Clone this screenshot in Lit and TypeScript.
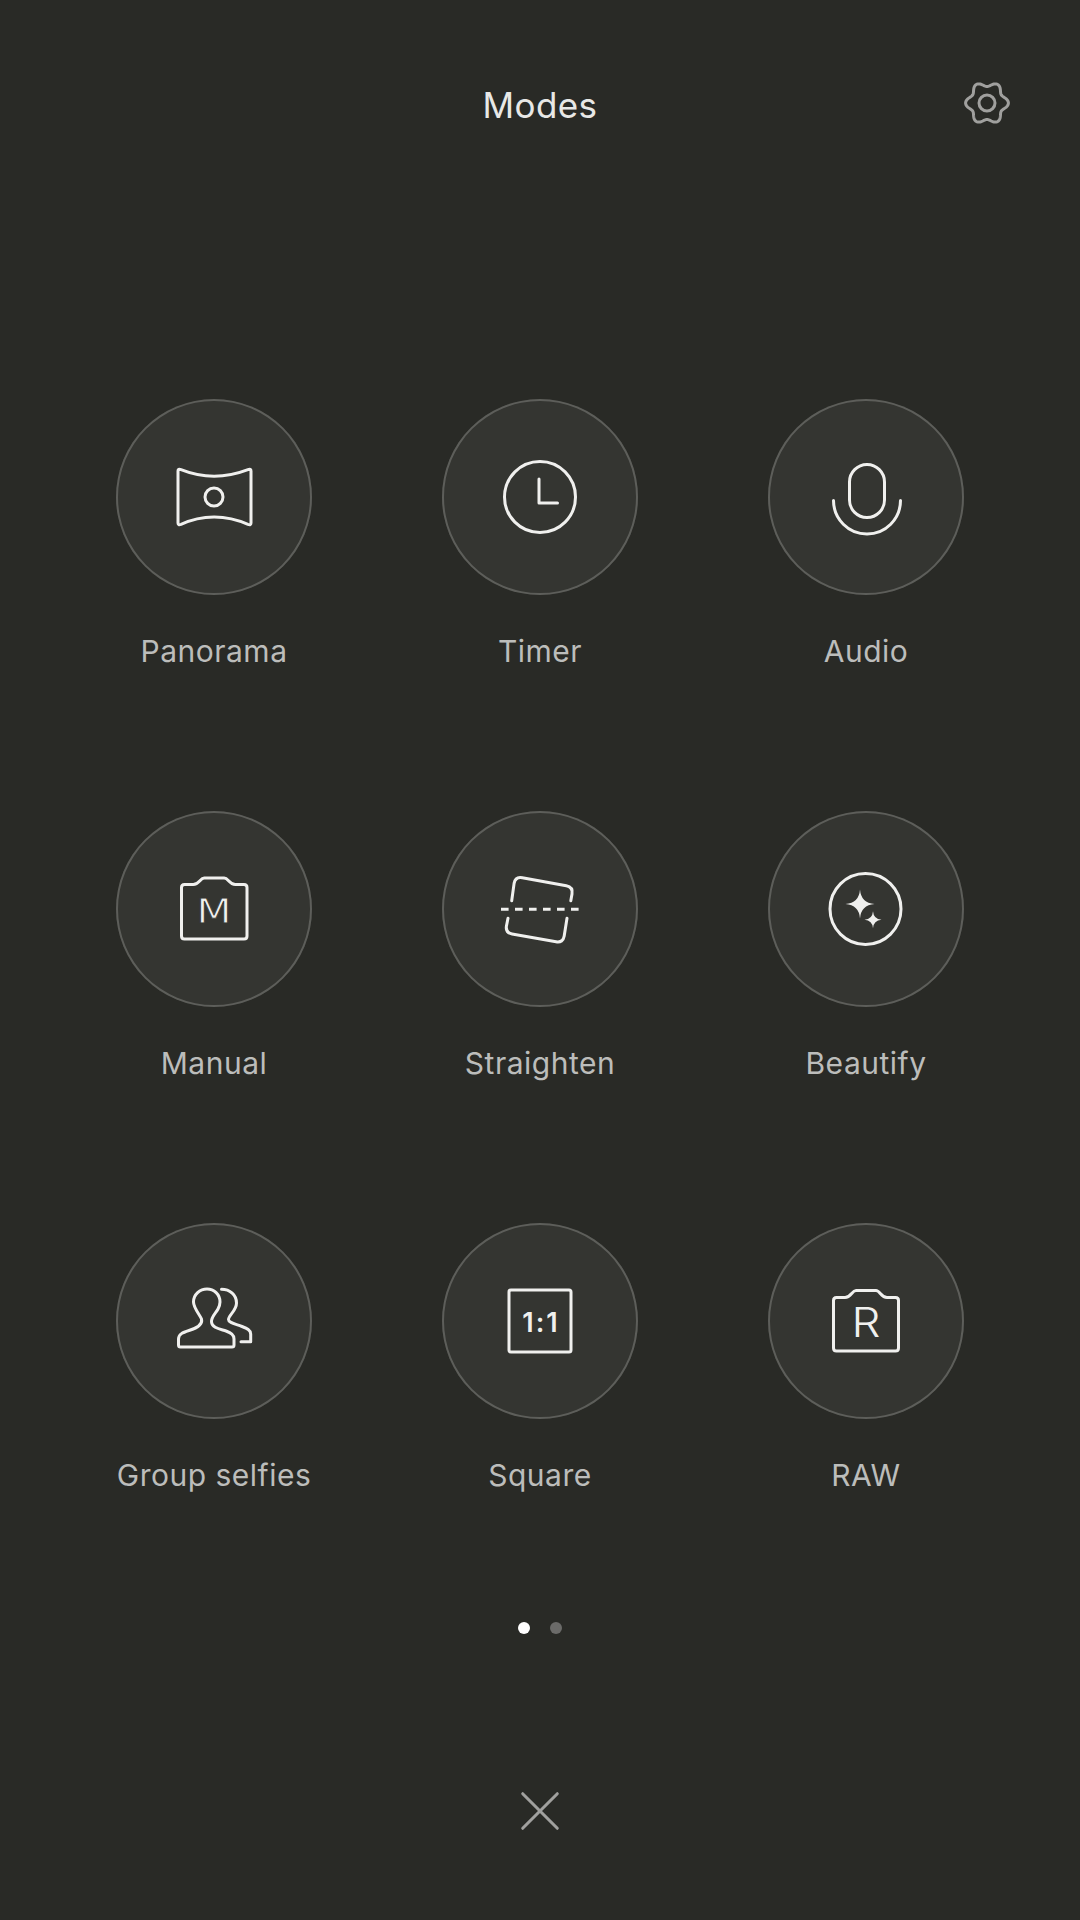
import { LitElement, html, css, svg } from "lit";
import { customElement } from "lit/decorators.js";

const gearPath = (() => {
  const pts: string[] = [];
  for (let i = 0; i < 180; i++) {
    const t = (i / 180) * Math.PI * 2;
    const r = 18.9 + 2.5 * Math.cos(6 * t);
    pts.push(`${(24 + r * Math.cos(t)).toFixed(2)} ${(24 + r * Math.sin(t)).toFixed(2)}`);
  }
  return "M" + pts.join("L") + "Z";
})();

const camera = (l: number, r: number, top: number, sh: number, bot: number) => {
  const c = (l + r) / 2;
  return svg`<path d="M${l + 3} ${sh} H${c - 21} C${c - 15} ${sh} ${c - 14} ${top} ${c - 10} ${top} H${c + 10} C${c + 14} ${top} ${c + 15} ${sh} ${c + 21} ${sh} H${r - 3} Q${r} ${sh} ${r} ${sh + 3} V${bot - 3} Q${r} ${bot} ${r - 3} ${bot} H${l + 3} Q${l} ${bot} ${l} ${bot - 3} V${sh + 3} Q${l} ${sh} ${l + 3} ${sh}Z"/>`;
};

const sparkle = (x: number, y: number, a: number, c: number) =>
  svg`<path class="solid" d="M${x} ${y - a} Q${x + c} ${y - c} ${x + a} ${y} Q${x + c} ${y + c} ${x} ${y + a} Q${x - c} ${y + c} ${x - a} ${y} Q${x - c} ${y - c} ${x} ${y - a}Z"/>`;

const modes = [
  { label: "Panorama", icon: svg`
    <path d="M62 72 Q62 69.5 65 70.6 C86 79 110 79 132 70.6 Q135 69.5 135 72 V124 Q135 126.5 132 125.4 C110 115.5 86 115.5 65 125.4 Q62 126.5 62 124Z"/>
    <circle cx="98" cy="98" r="9"/>` },
  { label: "Timer", icon: svg`
    <circle cx="98" cy="98" r="35.5"/>
    <path d="M97 80 V104 H115.5"/>` },
  { label: "Audio", icon: svg`
    <rect x="81.5" y="65.5" width="35" height="53" rx="17.5"/>
    <path d="M65.5 101.5 A33.5 33.5 0 0 0 132.5 101.5"/>` },
  { label: "Manual", icon: svg`
    ${camera(65.5, 131, 67, 73.5, 128)}
    <text class="m" x="98" y="111.8" textLength="35" lengthAdjust="spacingAndGlyphs">M</text>` },
  { label: "Straighten", icon: svg`
    <path d="M69.7 89.7 L72.1 72.4 Q73.4 65.5 80.3 66.8 L124.3 74.7 Q131.2 76 130 82.9 L128.8 89.7"/>
    <path d="M125 107.3 L122.2 125.1 Q121 132 114.1 130.8 L70.1 122.9 Q63.2 121.6 64.5 114.7 L66 107.3"/>
    <path class="dash" d="M59 98.3 H137.5"/>` },
  { label: "Beautify", icon: svg`
    <circle cx="97.5" cy="98" r="35.5"/>
    ${sparkle(92, 93, 14.5, 1)}
    ${sparkle(105, 108.7, 8.5, 0.6)}` },
  { label: "Group selfies", icon: svg`
    <path d="M64.5 124 H116 Q118 124 118 122 V116 C118 111.5 115 110 110 108 C104 106 96 105 95.5 99 C95 94 100 90 102 86 C103.5 83 104 81 104 79 C104 71.5 98 66 91 66 C84 66 77.5 71.5 77.5 79 C77.5 85 84 92 85.5 96 C87 102 81 105 73 107.5 C67 109.5 62.5 111 62.5 116 V122 Q62.5 124 64.5 124Z"/>
    <path d="M105.5 66.3 C114 66.3 120.5 72 120.5 80 C120.5 88 112.5 92 112.5 96.5 C112.5 100 120 101 126 103.5 C131 105.5 134.7 107 134.7 111 V118.7 H125"/>` },
  { label: "Square", icon: svg`
    <rect x="67" y="67" width="62" height="62" rx="2"/>
    <text class="ratio" x="99" y="109.3">1:1</text>` },
  { label: "RAW", icon: svg`
    ${camera(65.5, 130.5, 67.5, 74.5, 128)}
    <text class="r" x="98" y="114.4" textLength="29" lengthAdjust="spacingAndGlyphs">R</text>` },
];

@customElement("app-root")
export class AppRoot extends LitElement {
  static styles = css`
    :host {
      display: block;
      width: 1080px;
      height: 1920px;
      background: #292a26;
      font-family: Inter, "Noto Sans", sans-serif;
      overflow: hidden;
    }
    .header {
      display: grid;
      grid-template-columns: 1fr auto 1fr;
      align-items: center;
      height: 210px;
      padding-right: 69.5px;
      padding-left: 69.5px;
    }
    .title {
      grid-column: 2;
      color: #e8e8e6;
      font-size: 35px;
      letter-spacing: 0.4px;
      line-height: 40px;
    }
    .gear {
      grid-column: 3;
      justify-self: end;
      width: 48px;
      height: 48px;
      margin-bottom: 4px;
      fill: none;
      stroke: #a0a09e;
      stroke-width: 3;
    }
    .grid {
      display: grid;
      grid-template-columns: repeat(3, 326px);
      grid-auto-rows: 412px;
      padding: 189px 51px 0;
    }
    .cell {
      display: flex;
      flex-direction: column;
      align-items: center;
    }
    .circle {
      width: 196px;
      height: 196px;
      border-radius: 50%;
      background: #343531;
      box-shadow: inset 0 0 0 2px #5d5e5a;
    }
    .circle svg {
      display: block;
      fill: none;
      stroke: #f0f0ee;
      stroke-width: 3;
      stroke-linecap: round;
      stroke-linejoin: round;
    }
    .circle .solid { fill: #f0f0ee; stroke: none; }
    .circle .dash {
      stroke-linecap: butt;
      stroke-dasharray: 7.6 6.4;
    }
    .circle text { stroke: none; fill: #f0f0ee; text-anchor: middle; }
    .circle .m {
      font-family: "DejaVu Sans", sans-serif;
      font-size: 33px;
      stroke: #343531;
      stroke-width: 0.8px;
    }
    .circle .r { font-family: Inter, sans-serif; font-size: 41px; font-weight: 300; }
    .circle .ratio { font-family: Inter, sans-serif; font-size: 27px; font-weight: 600; letter-spacing: 2px; }
    .label {
      margin-top: 38px;
      color: #bcbdbb;
      font-size: 30px;
      letter-spacing: 0.5px;
      line-height: 36px;
      white-space: nowrap;
    }
    .dots {
      display: flex;
      justify-content: center;
      gap: 20px;
      margin-top: -13px;
    }
    .dot {
      width: 12px;
      height: 12px;
      border-radius: 50%;
      background: #6b6b69;
    }
    .dot.on { background: #fff; }
    .close {
      display: block;
      width: 44px;
      height: 44px;
      margin: 155px auto 0;
      stroke: #a0a09e;
      stroke-width: 3;
      stroke-linecap: round;
      fill: none;
    }
  `;

  render() {
    return html`
      <div class="header">
        <div class="title">Modes</div>
        <svg class="gear" viewBox="0 0 48 48">
          <path d=${gearPath}></path>
          <circle cx="24" cy="24" r="8"></circle>
        </svg>
      </div>
      <div class="grid">
        ${modes.map(
          (m) => html`
            <div class="cell">
              <div class="circle">
                <svg width="196" height="196" viewBox="0 0 196 196">${m.icon}</svg>
              </div>
              <div class="label">${m.label}</div>
            </div>
          `
        )}
      </div>
      <div class="dots">
        <div class="dot on"></div>
        <div class="dot"></div>
      </div>
      <svg class="close" viewBox="0 0 44 44">
        <path d="M4.7 4.7 L39.3 39.3 M39.3 4.7 L4.7 39.3"></path>
      </svg>
    `;
  }
}
